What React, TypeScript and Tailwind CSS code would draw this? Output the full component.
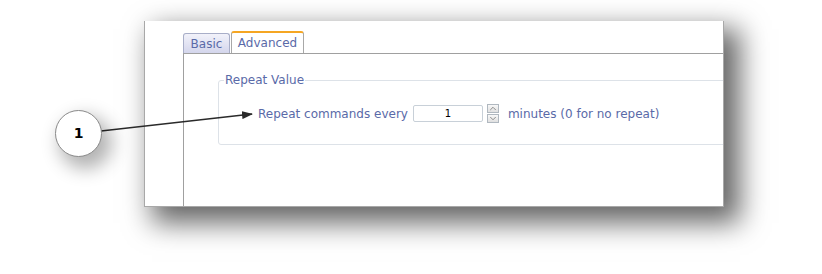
import { ChevronUp, ChevronDown } from "lucide-react";

const font = { fontFamily: '"DejaVu Sans", Verdana, sans-serif' };

function Spinner() {
  return (
    <div className="ml-[4px] flex h-[19px] w-[12px] flex-col gap-px">
      <div className="flex h-[9px] items-center justify-center border border-[#b0b8c0] bg-gradient-to-b from-[#f8f8f8] to-[#e0e0e0]">
        <ChevronUp size={11} strokeWidth={2} className="text-[#7a7a7a]" />
      </div>
      <div className="flex h-[9px] items-center justify-center border border-[#b0b8c0] bg-gradient-to-b from-[#f8f8f8] to-[#e0e0e0]">
        <ChevronDown size={11} strokeWidth={2} className="text-[#7a7a7a]" />
      </div>
    </div>
  );
}

export default function App() {
  return (
    <div className="relative h-[274px] w-[822px] overflow-hidden bg-white" style={font}>
      <div className="pl-[144px] pt-[21px]">
        {/* captured window */}
        <div className="flex h-[186px] w-[580px] overflow-hidden border border-t-0 border-[#a8a8a8] bg-white shadow-[12px_12px_26px_4px_rgba(0,0,0,0.6)]">
          <div className="w-[38px] shrink-0" />
          <div className="flex flex-1 flex-col">
            {/* tabs */}
            <div className="flex h-[32px] items-end">
              <div className="flex h-[20px] w-[47px] items-center justify-center rounded-t-[3px] border border-b-0 border-[#a8aec8] bg-gradient-to-b from-[#f2f2fa] to-[#d4d6ec] text-[12px] text-[#5a6aa8]">
                Basic
              </div>
              <div className="ml-px flex h-[22px] w-[73px] items-center justify-center rounded-t-[3px] border border-b-0 border-t-2 border-[#a8a8a8] border-t-[#f5a623] bg-white text-[12px] text-[#5a6aa8]">
                Advanced
              </div>
            </div>
            {/* tab body */}
            <div className="flex-1 border-l border-t border-[#a0a0a0] pl-[34px] pt-[26px]">
              <div className="relative h-[65px] w-[560px] rounded-[3px] border border-[#dde2e8]">
                <span className="absolute -top-[9px] left-[5px] bg-white px-px text-[12px] leading-[16px] text-[#5a6aa8]">
                  Repeat Value
                </span>
                <div className="flex items-center pl-[39px] pt-[23px] text-[12px] text-[#5a6aa8]">
                  <span>Repeat commands every</span>
                  <div className="ml-[5px] flex h-[17px] w-[70px] items-center justify-center rounded-[2px] border border-[#c8d0d8] text-[10px] text-black">
                    1
                  </div>
                  <Spinner />
                  <span className="ml-[9px]">minutes (0 for no repeat)</span>
                </div>
              </div>
            </div>
          </div>
        </div>
      </div>

      {/* callout annotation */}
      <svg className="pointer-events-none absolute inset-0" width="822" height="274">
        <defs>
          <marker id="ah" markerWidth="11" markerHeight="8" refX="10" refY="4" orient="auto" markerUnits="userSpaceOnUse">
            <path d="M0,0 L11,4 L0,8 Z" fill="#2a2a2a" />
          </marker>
        </defs>
        <line x1="101" y1="131" x2="252" y2="114" stroke="#2a2a2a" strokeWidth="1.7" markerEnd="url(#ah)" />
      </svg>
      <div className="absolute left-[55px] top-[110px] flex h-[47px] w-[47px] items-center justify-center rounded-full border border-[#8a8a8a] bg-white text-[14px] font-bold text-black shadow-[7px_9px_18px_3px_rgba(0,0,0,0.3)]">
        1
      </div>
    </div>
  );
}
